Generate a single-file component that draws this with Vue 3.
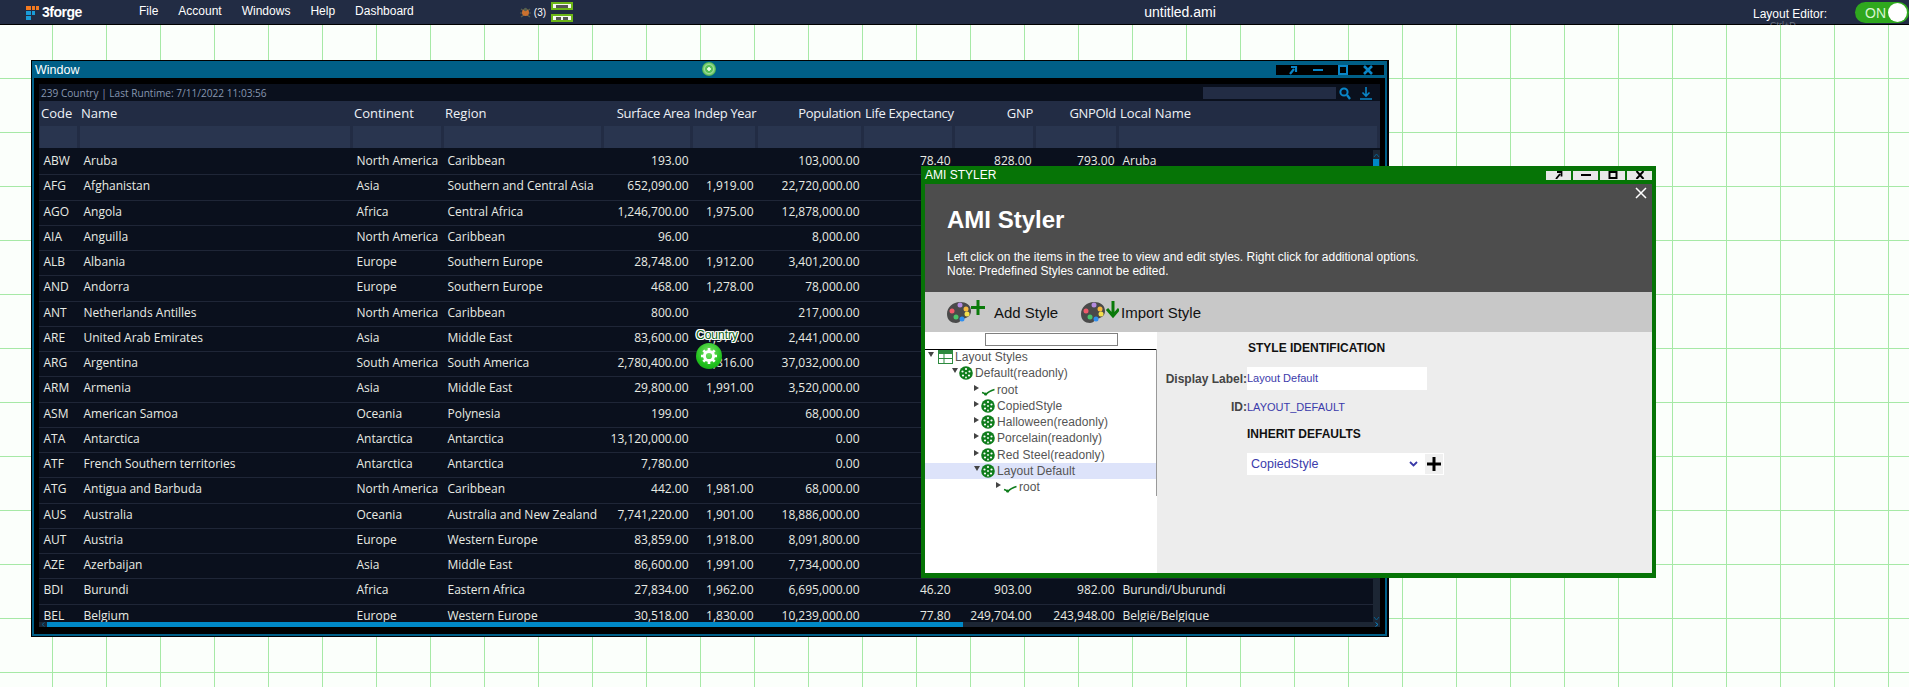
<script setup>
const menus = ["File", "Account", "Windows", "Help", "Dashboard"];

const columns = [
  { label: "Code", width: 40 },
  { label: "Name", width: 273 },
  { label: "Continent", width: 91 },
  { label: "Region", width: 160 },
  { label: "Surface Area", width: 89, num: true },
  { label: "Indep Year", width: 65, num: true },
  { label: "Population", width: 106, num: true },
  { label: "Life Expectancy", width: 91, num: true },
  { label: "GNP", width: 81, num: true },
  { label: "GNPOld", width: 83, num: true },
  { label: "Local Name", width: 261 },
];

const gridCols = columns.map((c) => c.width + "px").join(" ");

// the right hand columns are left empty where the styler window sits on top of them
const rows = [
  ["ABW", "Aruba", "North America", "Caribbean", "193.00", "", "103,000.00", "78.40", "828.00", "793.00", "Aruba"],
  ["AFG", "Afghanistan", "Asia", "Southern and Central Asia", "652,090.00", "1,919.00", "22,720,000.00", "", "", "", ""],
  ["AGO", "Angola", "Africa", "Central Africa", "1,246,700.00", "1,975.00", "12,878,000.00", "", "", "", ""],
  ["AIA", "Anguilla", "North America", "Caribbean", "96.00", "", "8,000.00", "", "", "", ""],
  ["ALB", "Albania", "Europe", "Southern Europe", "28,748.00", "1,912.00", "3,401,200.00", "", "", "", ""],
  ["AND", "Andorra", "Europe", "Southern Europe", "468.00", "1,278.00", "78,000.00", "", "", "", ""],
  ["ANT", "Netherlands Antilles", "North America", "Caribbean", "800.00", "", "217,000.00", "", "", "", ""],
  ["ARE", "United Arab Emirates", "Asia", "Middle East", "83,600.00", "1,971.00", "2,441,000.00", "", "", "", ""],
  ["ARG", "Argentina", "South America", "South America", "2,780,400.00", "1,816.00", "37,032,000.00", "", "", "", ""],
  ["ARM", "Armenia", "Asia", "Middle East", "29,800.00", "1,991.00", "3,520,000.00", "", "", "", ""],
  ["ASM", "American Samoa", "Oceania", "Polynesia", "199.00", "", "68,000.00", "", "", "", ""],
  ["ATA", "Antarctica", "Antarctica", "Antarctica", "13,120,000.00", "", "0.00", "", "", "", ""],
  ["ATF", "French Southern territories", "Antarctica", "Antarctica", "7,780.00", "", "0.00", "", "", "", ""],
  ["ATG", "Antigua and Barbuda", "North America", "Caribbean", "442.00", "1,981.00", "68,000.00", "", "", "", ""],
  ["AUS", "Australia", "Oceania", "Australia and New Zealand", "7,741,220.00", "1,901.00", "18,886,000.00", "", "", "", ""],
  ["AUT", "Austria", "Europe", "Western Europe", "83,859.00", "1,918.00", "8,091,800.00", "", "", "", ""],
  ["AZE", "Azerbaijan", "Asia", "Middle East", "86,600.00", "1,991.00", "7,734,000.00", "", "", "", ""],
  ["BDI", "Burundi", "Africa", "Eastern Africa", "27,834.00", "1,962.00", "6,695,000.00", "46.20", "903.00", "982.00", "Burundi/Uburundi"],
  ["BEL", "Belgium", "Europe", "Western Europe", "30,518.00", "1,830.00", "10,239,000.00", "77.80", "249,704.00", "243,948.00", "België/Belgique"],
];

const tree = [
  { label: "Layout Styles", level: 0, open: true, icon: "table" },
  { label: "Default(readonly)", level: 1, open: true, icon: "palette" },
  { label: "root", level: 2, icon: "check" },
  { label: "CopiedStyle", level: 2, icon: "palette" },
  { label: "Halloween(readonly)", level: 2, icon: "palette" },
  { label: "Porcelain(readonly)", level: 2, icon: "palette" },
  { label: "Red Steel(readonly)", level: 2, icon: "palette" },
  { label: "Layout Default", level: 2, open: true, icon: "palette", selected: true },
  { label: "root", level: 3, icon: "check" },
];
</script>

<template>
  <div class="page">
    <header class="topbar">
      <div class="logo">
        <svg width="15" height="16" viewBox="0 0 15 16">
          <rect x="0" y="2" width="5" height="4" fill="#f47a20" />
          <rect x="6" y="2" width="3" height="4" fill="#f47a20" />
          <rect x="10" y="2" width="3" height="4" fill="#f47a20" />
          <rect x="0" y="7" width="5" height="4" fill="#1a9bd7" />
          <rect x="6" y="7" width="3" height="4" fill="#1a9bd7" />
          <rect x="0" y="12" width="5" height="4" fill="#1a9bd7" />
        </svg>
        <span>3forge</span>
      </div>
      <nav class="menu">
        <span v-for="m in menus" :key="m">{{ m }}</span>
      </nav>
      <div class="status-icons">
        <svg width="11" height="11" viewBox="0 0 11 11">
          <path d="M1 2l3 2M10 2 7 4M0 6h3M11 6H8M1 10l3-2M10 10 7 8" stroke="#56604f" stroke-width="1.200" />
          <circle cx="5.500" cy="5.500" r="3.500" fill="#c9702f" />
          <circle cx="5.500" cy="2.500" r="1.700" fill="#56604f" />
        </svg>
        <span class="count">(3)</span>
        <div class="mini-btns">
          <span class="mini"><i></i></span>
          <span class="mini"><i class="two"></i></span>
        </div>
      </div>
      <div class="doc-title">untitled.ami</div>
      <div class="editor-label">
        Layout Editor:
        <small>Ctrl+D</small>
      </div>
      <div class="toggle"><b>ON</b><i></i></div>
    </header>

    <main class="canvas">
      <section class="window">
        <div class="win-title">
          <span>Window</span>
          <div class="win-dot"></div>
          <div class="win-ctrls">
            <svg width="12" height="10" viewBox="0 0 12 10"><path d="M3 9 7 4M4 2h5v5" fill="none" stroke="#0a86c8" stroke-width="2.200" /></svg>
            <svg width="12" height="10" viewBox="0 0 12 10"><rect x="1" y="4" width="10" height="2" fill="#0a86c8" /></svg>
            <svg width="12" height="10" viewBox="0 0 12 10"><rect x="2" y="1" width="8" height="8" fill="none" stroke="#0a86c8" stroke-width="2" /></svg>
            <svg width="12" height="10" viewBox="0 0 12 10"><path d="M2 1 10 9M10 1 2 9" stroke="#0a86c8" stroke-width="2.600" /></svg>
          </div>
        </div>
        <div class="win-body">
          <div class="tbl">
            <div class="tbl-status">
              <span>239 Country | Last Runtime: 7/11/2022 11:03:56</span>
              <div class="tbl-search"></div>
              <svg width="12" height="14" viewBox="0 0 12 14"><circle cx="5" cy="6" r="3.600" fill="none" stroke="#0a86c8" stroke-width="2" /><path d="M8 9l3 4" stroke="#0a86c8" stroke-width="2.400" /></svg>
              <svg class="dl" width="12" height="14" viewBox="0 0 12 14"><path d="M6 1v9M2.500 6.500 6 10l3.500-3.500M0 13h12" fill="none" stroke="#0a86c8" stroke-width="1.600" /></svg>
            </div>
            <div class="tbl-head">
              <div class="head-row" :style="{ gridTemplateColumns: gridCols }">
                <div v-for="c in columns" :key="c.label" class="hcell" :class="{ num: c.num }">{{ c.label }}</div>
              </div>
              <div class="filter-row" :style="{ gridTemplateColumns: gridCols }">
                <div v-for="c in columns" :key="c.label" class="fcell"></div>
              </div>
            </div>
            <div class="tbl-rows">
              <div v-for="r in rows" :key="r[0]" class="row" :style="{ gridTemplateColumns: gridCols }">
                <div v-for="(v, i) in r" :key="i" class="cell" :class="{ num: columns[i].num }">{{ v }}</div>
              </div>
              <div class="vscroll">
                <svg class="up" width="7" height="5" viewBox="0 0 7 5"><path d="M1 4 3.500 1 6 4" fill="none" stroke="#0a5f8c" /></svg>
                <i></i>
                <svg class="down" width="7" height="5" viewBox="0 0 7 5"><path d="M1 1 3.500 4 6 1" fill="none" stroke="#0a5f8c" /></svg>
              </div>
            </div>
            <div class="hscroll">
              <svg class="left" width="5" height="5" viewBox="0 0 5 5"><path d="M3.500 0.500 1 2.500 3.500 4.500" fill="none" stroke="#0a5f8c" /></svg>
              <i></i>
              <svg class="right" width="5" height="5" viewBox="0 0 5 5"><path d="M1.500 0.500 4 2.500 1.500 4.500" fill="none" stroke="#0a86c8" /></svg>
            </div>
          </div>
        </div>
        <div class="col-tag">
          <span>Country</span>
          <div class="gear">
            <svg width="18" height="18" viewBox="0 0 18 18">
              <circle cx="9" cy="9" r="4.600" fill="none" stroke="#fff" stroke-width="3" />
              <path d="M9 1v3M9 14v3M1 9h3M14 9h3M3.300 3.300l2.200 2.200M12.500 12.500l2.200 2.200M14.700 3.300l-2.200 2.200M5.500 12.500l-2.200 2.200" stroke="#fff" stroke-width="2.600" />
            </svg>
          </div>
        </div>
      </section>

      <section class="styler">
        <div class="st-title">
          <span>AMI STYLER</span>
          <div class="st-ctrls">
            <span><svg width="10" height="8" viewBox="0 0 10 8"><path d="M2 8 6 3M3 1h4.500v4.500" fill="none" stroke="#000" stroke-width="1.800" /></svg></span>
            <span><svg width="10" height="8" viewBox="0 0 10 8"><rect x="0" y="3" width="10" height="2" /></svg></span>
            <span><svg width="10" height="8" viewBox="0 0 10 8"><rect x="1.500" y="1" width="7" height="6" fill="none" stroke="#000" stroke-width="2" /></svg></span>
            <span><svg width="10" height="8" viewBox="0 0 10 8"><path d="M1.500 0 8.500 8M8.500 0 1.500 8" stroke="#000" stroke-width="2" /></svg></span>
          </div>
        </div>
        <div class="st-body">
          <div class="st-head">
            <svg class="st-close" width="12" height="12" viewBox="0 0 12 12"><path d="M1 1 11 11M11 1 1 11" stroke="#fff" stroke-width="1.500" /></svg>
            <h1>AMI Styler</h1>
            <p>Left click on the items in the tree to view and edit styles. Right click for additional options.<br />Note: Predefined Styles cannot be edited.</p>
          </div>
          <div class="st-tools">
            <div class="tool add">
              <svg width="38" height="24" viewBox="0 0 38 24">
                <path d="M13 2C6 2 0 7 0 14c0 6 4 9 9 9 4 0 4-3 7-4 4-1 8-3 8-8 0-6-5-9-11-9z" fill="#4a4a4a" />
                <circle cx="13" cy="5" r="2.500" fill="#b48be0" /><circle cx="19" cy="9" r="2.500" fill="#f5b942" /><circle cx="20" cy="14" r="2.500" fill="#f4e04d" />
                <circle cx="15" cy="19" r="2.500" fill="#2f8ff0" /><circle cx="9" cy="17" r="2.500" fill="#49c46a" /><circle cx="5" cy="11" r="2.500" fill="#ef5a6a" />
                <path d="M31 0v15M24 7.500h14" stroke="#0a7a0a" stroke-width="3" />
              </svg>
              <span>Add Style</span>
            </div>
            <div class="tool imp">
              <svg width="38" height="24" viewBox="0 0 38 24">
                <path d="M13 2C6 2 0 7 0 14c0 6 4 9 9 9 4 0 4-3 7-4 4-1 8-3 8-8 0-6-5-9-11-9z" fill="#4a4a4a" />
                <circle cx="13" cy="5" r="2.500" fill="#b48be0" /><circle cx="19" cy="9" r="2.500" fill="#f5b942" /><circle cx="20" cy="14" r="2.500" fill="#f4e04d" />
                <circle cx="15" cy="19" r="2.500" fill="#2f8ff0" /><circle cx="9" cy="17" r="2.500" fill="#49c46a" /><circle cx="5" cy="11" r="2.500" fill="#ef5a6a" />
                <path d="M32 1v13M26 9l6 7 6-7" fill="none" stroke="#0a7a0a" stroke-width="3" />
              </svg>
              <span>Import Style</span>
            </div>
          </div>
          <div class="st-main">
            <aside class="tree">
              <div class="tree-search"><div class="tree-input"></div></div>
              <ul class="tree-list">
                <li v-for="(n, i) in tree" :key="i" class="node" :class="['lvl' + n.level, { sel: n.selected }]">
                  <i class="arrow" :class="{ open: n.open }"></i>
                  <svg v-if="n.icon === 'table'" width="15" height="14" viewBox="0 0 15 14">
                    <rect x="0.500" y="0.500" width="14" height="13" fill="#fff" stroke="#2d8a3e" />
                    <rect x="0.500" y="0.500" width="14" height="3.500" fill="#2d8a3e" />
                    <path d="M0.500 8.500h14M6 4v10" stroke="#2d8a3e" />
                  </svg>
                  <svg v-else-if="n.icon === 'palette'" width="14" height="14" viewBox="0 0 14 14">
                    <circle cx="7" cy="7" r="6.800" fill="#0f7d1c" />
                    <circle cx="7" cy="3" r="1.100" fill="#fff" /><circle cx="3.500" cy="5.500" r="1.100" fill="#fff" /><circle cx="10.500" cy="5.500" r="1.100" fill="#fff" />
                    <circle cx="4" cy="9.500" r="1.100" fill="#fff" /><circle cx="10" cy="9.500" r="1.100" fill="#fff" /><circle cx="7" cy="7" r="0.900" fill="#fff" /><circle cx="7" cy="11.500" r="0.900" fill="#fff" />
                  </svg>
                  <svg v-else width="14" height="14" viewBox="0 0 14 14">
                    <path d="M1 9.500C3 10 4 11 5 11.500 7 9 10 7.500 13.500 6.500" fill="none" stroke="#0f7d1c" stroke-width="1.600" />
                    <circle cx="4.500" cy="11" r="1.500" fill="#0f7d1c" />
                  </svg>
                  <span>{{ n.label }}</span>
                </li>
              </ul>
            </aside>
            <div class="form">
              <h3 class="sec1">STYLE IDENTIFICATION</h3>
              <div class="f-row f-display">
                <label>Display Label:</label>
                <div class="f-input">Layout Default</div>
              </div>
              <div class="f-row f-id">
                <label>ID:</label>
                <div class="f-val">LAYOUT_DEFAULT</div>
              </div>
              <h3 class="sec2">INHERIT DEFAULTS</h3>
              <div class="f-select-row">
                <div class="f-select">
                  <span>CopiedStyle</span>
                  <svg width="9" height="6" viewBox="0 0 9 6"><path d="M1 1 4.500 4.500 8 1" fill="none" stroke="#3a3aa8" stroke-width="1.800" /></svg>
                </div>
                <div class="f-plus">
                  <svg width="14" height="14" viewBox="0 0 14 14"><path d="M7 0v14M0 7h14" stroke="#000" stroke-width="3" /></svg>
                </div>
              </div>
            </div>
          </div>
        </div>
      </section>
    </main>
  </div>
</template>

<style>
html,
body {
  margin: 0;
  overflow: hidden;
}
</style>

<style scoped>
.page {
  width: 1909px;
  height: 687px;
  display: flex;
  flex-direction: column;
  font-family: "Liberation Sans", Arial, sans-serif;
}

/* top bar */
.topbar {
  height: 24px;
  flex: none;
  background: #222c44;
  border-bottom: 1px solid #000;
  color: #fff;
  display: flex;
  align-items: center;
  position: relative;
  font-size: 12px;
}
.logo {
  display: flex;
  align-items: center;
  gap: 1px;
  margin-left: 26px;
  width: 113px;
  font-weight: 700;
  font-size: 14px;
  letter-spacing: -0.5px;
}
.menu {
  display: flex;
  gap: 20px;
  margin-top: -3px;
}
.status-icons {
  display: flex;
  align-items: center;
  margin-left: 106px;
  gap: 3px;
}
.count {
  font-size: 10px;
}
.mini-btns {
  display: flex;
  flex-direction: column;
  gap: 3.500px;
  margin-left: 2px;
}
.mini {
  width: 22px;
  height: 8.500px;
  box-sizing: border-box;
  background: #f6f8f2;
  border: 2px solid #6cb517;
  display: flex;
  align-items: center;
  justify-content: center;
}
.mini i {
  display: block;
  width: 12px;
  height: 3px;
  background: #555;
}
.mini i.two {
  width: 12px;
  background: linear-gradient(90deg, #555 40%, transparent 40% 60%, #555 60%);
}
.doc-title {
  position: absolute;
  left: 1080px;
  width: 200px;
  text-align: center;
  font-size: 14px;
  top: 4px;
}
.editor-label {
  position: absolute;
  left: 1753px;
  top: 7px;
  line-height: 14px;
}
.editor-label small {
  position: absolute;
  left: 17px;
  top: 11px;
  font-size: 9px;
  color: #6b7280;
  white-space: nowrap;
}
.toggle {
  position: absolute;
  left: 1855px;
  top: 2px;
  width: 54px;
  height: 21px;
  border-radius: 11px;
  background: #2fa81e;
  display: flex;
  align-items: center;
  justify-content: space-between;
  padding: 0 2px 0 10px;
  box-sizing: border-box;
}
.toggle b {
  font-size: 14px;
  font-weight: 400;
  color: #d8f5d0;
}
.toggle i {
  width: 19px;
  height: 19px;
  border-radius: 50%;
  background: #fff;
}

/* canvas */
.canvas {
  flex: 1;
  position: relative;
  background-color: #fbfffb;
  background-image: linear-gradient(90deg, #a6e9a6 1px, transparent 1px),
    linear-gradient(#a6e9a6 1px, transparent 1px);
  background-size: 54px 54px;
  background-position: 52px 53px;
}

/* table window */
.window {
  position: absolute;
  left: 31px;
  top: 35px;
  width: 1358px;
  height: 577px;
  box-sizing: border-box;
  background: #005f87;
  border: 1px solid #000;
  border-right-width: 2px;
  display: flex;
  flex-direction: column;
}
.win-title {
  height: 17px;
  flex: none;
  display: flex;
  align-items: center;
  color: #fff;
  font-size: 12.500px;
  padding-left: 3px;
  position: relative;
}
.win-dot {
  position: absolute;
  left: 670px;
  top: 1px;
  width: 14px;
  height: 14px;
  border-radius: 50%;
  background: radial-gradient(circle, #e8ffe8 0 1.500px, #58c058 2px 3.500px, #9fdd98 4.500px, #45b045 7px);
}
.win-ctrls {
  position: absolute;
  left: 1244px;
  top: 4px;
  width: 108px;
  height: 10px;
  background: #000;
  display: flex;
  justify-content: space-around;
  padding: 0 4px;
  box-sizing: border-box;
}
.win-body {
  flex: 1;
  min-height: 0;
  margin: 0 2px 2px 2px;
  background: #000;
  padding: 6px 5px 7px 5px;
  display: flex;
}
.tbl {
  flex: 1;
  min-width: 0;
  background: #0a101d;
  display: flex;
  flex-direction: column;
  overflow: hidden;
}
.tbl-status {
  height: 17px;
  flex: none;
  display: flex;
  align-items: center;
  font-family: "Open Sans", sans-serif;
  font-size: 10.100px;
  color: #8796b0;
  padding-left: 2px;
}
.tbl-status span {
  flex: 1;
}
.tbl-search {
  width: 133px;
  height: 12px;
  background: #222c44;
  margin-right: 3px;
}
.tbl-status .dl {
  margin: 0 8px 0 9px;
}
.tbl-head {
  flex: none;
  background: #222c44;
}
.head-row,
.filter-row,
.row {
  display: grid;
}
.head-row {
  height: 25px;
  font-family: "Open Sans", sans-serif;
  font-size: 13px;
  color: #eef1f6;
}
.hcell {
  padding: 0 2px;
  line-height: 25px;
  white-space: nowrap;
}
.hcell.num {
  text-align: right;
  letter-spacing: -0.3px;
}
.filter-row {
  height: 22px;
}
.fcell {
  background: #29354f;
  margin: 0 2px 0 1px;
}
.tbl-rows {
  flex: 1;
  min-height: 0;
  margin-top: 2px;
  position: relative;
  overflow: hidden;
}
.row {
  height: 25.250px;
  box-sizing: border-box;
  border-bottom: 1px solid #1f2637;
  font-family: "Open Sans", sans-serif;
  font-size: 12px;
  color: #e8ebe4;
  line-height: 22px;
}
.cell {
  padding: 0 3.500px 0 4.500px;
  white-space: nowrap;
  overflow: hidden;
}
.cell.num {
  text-align: right;
  overflow: visible;
}
.vscroll {
  position: absolute;
  right: 0;
  top: 0;
  bottom: 0;
  width: 7px;
  background: #1c2634;
}
.vscroll .up,
.vscroll .down {
  position: absolute;
  left: 0;
}
.vscroll .up {
  top: 3px;
}
.vscroll .down {
  bottom: 1px;
}
.vscroll i {
  display: block;
  margin-top: 9px;
  width: 6px;
  height: 156px;
  background: #0088c6;
}
.hscroll {
  height: 5px;
  flex: none;
  background: #1c2634;
  padding-left: 8px;
  position: relative;
}
.hscroll i {
  display: block;
  width: 916px;
  height: 5px;
  background: #0088c6;
}
.hscroll .left,
.hscroll .right {
  position: absolute;
  top: 0;
}
.hscroll .left {
  left: 2px;
}
.hscroll .right {
  right: 1px;
}

/* hover tag over the table */
.col-tag {
  position: absolute;
  left: 664px;
  top: 268px;
  width: 42px;
  display: flex;
  flex-direction: column;
  align-items: flex-start;
}
.col-tag span {
  font-size: 12px;
  line-height: 13px;
  color: #0b5d12;
  text-shadow: 1px 0 0 #fff, -1px 0 0 #fff, 0 1px 0 #fff, 0 -1px 0 #fff, 1px 1px 0 #fff, -1px -1px 0 #fff, 1px -1px 0 #fff, -1px 1px 0 #fff;
}
.gear {
  margin-top: 1px;
  width: 26px;
  height: 26px;
  border-radius: 50%;
  background: radial-gradient(circle at 50% 35%, #7be36a, #22c11e 60%, #12a012);
  display: flex;
  align-items: center;
  justify-content: center;
}

/* styler dialog */
.styler {
  position: absolute;
  left: 921px;
  top: 141px;
  width: 735px;
  height: 412px;
  box-sizing: border-box;
  background: #067406;
  padding: 0 4px 5px 4px;
  display: flex;
  flex-direction: column;
}
.st-title {
  height: 18px;
  flex: none;
  display: flex;
  align-items: center;
  justify-content: space-between;
  color: #fff;
  font-size: 12px;
}
.st-ctrls {
  display: flex;
  gap: 2px;
}
.st-ctrls span {
  width: 25px;
  height: 9px;
  background: #e8e8e8;
  display: flex;
  align-items: center;
  justify-content: center;
}
.st-body {
  flex: 1;
  min-height: 0;
  display: flex;
  flex-direction: column;
}
.st-head {
  height: 108px;
  flex: none;
  background: #4d4d4d;
  color: #fff;
  padding-left: 22px;
  position: relative;
  box-sizing: border-box;
}
.st-close {
  position: absolute;
  right: 5px;
  top: 3px;
}
.st-head h1 {
  margin: 0;
  padding-top: 22px;
  font-size: 24px;
  line-height: 28px;
  font-weight: 700;
}
.st-head p {
  margin: 16px 0 0;
  font-size: 12px;
  line-height: 14px;
}
.st-tools {
  height: 40px;
  flex: none;
  background: #c8c8c8;
  display: flex;
  align-items: center;
  padding-left: 22px;
  font-size: 15px;
  color: #111;
}
.tool {
  display: flex;
  align-items: center;
}
.tool.add {
  width: 134px;
}
.tool.add span {
  margin-left: 9px;
}
.tool.imp span {
  margin-left: 2px;
}
.st-main {
  flex: 1;
  min-height: 0;
  display: flex;
  background: #ededed;
}
.tree {
  width: 232px;
  flex: none;
  background: #fff;
}
.tree-search {
  height: 16px;
  border-bottom: 1px solid #000;
  padding-top: 1px;
}
.tree-input {
  margin-left: 60px;
  width: 133px;
  height: 13px;
  box-sizing: border-box;
  border: 1px solid #808080;
  background: #fff;
}
.tree-list {
  list-style: none;
  margin: -1px 0 0;
  padding: 0;
  height: 147px;
  border-right: 1px solid #999;
}
.node {
  height: 16.250px;
  display: flex;
  align-items: center;
  font-size: 12px;
  color: #555;
  white-space: nowrap;
  position: relative;
  letter-spacing: 0.05px;
}
.node.sel {
  background: #dde3fa;
}
.node svg {
  margin-right: 2px;
  flex: none;
}
.lvl0 { padding-left: 13px; }
.lvl1 { padding-left: 34px; }
.lvl2 { padding-left: 56px; }
.lvl3 { padding-left: 78px; }
.arrow {
  position: absolute;
  top: 3px;
  width: 0;
  height: 0;
  border-style: solid;
  border-color: transparent;
}
.arrow:not(.open) {
  border-width: 3px 0 3px 5px;
  border-left-color: #444;
}
.arrow.open {
  border-width: 5px 3px 0 3px;
  border-top-color: #444;
}
.lvl0 .arrow { left: 3px; }
.lvl1 .arrow { left: 27px; }
.lvl2 .arrow { left: 49px; }
.lvl3 .arrow { left: 71px; }
.form {
  flex: 1;
  min-width: 0;
  padding-left: 90px;
  color: #000;
  font-size: 12px;
  position: relative;
}
.form h3 {
  margin: 0;
  font-size: 12px;
  line-height: 14px;
  font-weight: 700;
  color: #111;
}
.sec1 {
  padding-top: 9px;
  padding-left: 1px;
}
.f-row {
  display: flex;
  align-items: center;
  margin-left: -90px;
}
.f-row label {
  width: 90px;
  text-align: right;
  font-weight: 700;
  font-size: 12px;
  color: #444;
  white-space: nowrap;
}
.f-display {
  margin-top: 12px;
  height: 23px;
}
.f-input {
  width: 180px;
  height: 23px;
  line-height: 23px;
  background: #fff;
  color: #3b3bab;
  font-size: 11px;
}
.f-id {
  margin-top: 5px;
  height: 23px;
}
.f-val {
  color: #3b3bab;
  font-size: 11px;
}
.form .sec2 {
  margin-top: 9px;
}
.f-select-row {
  display: flex;
  margin-top: 12px;
  height: 22px;
}
.f-select {
  width: 177px;
  box-sizing: border-box;
  background: #fff;
  display: flex;
  align-items: center;
  justify-content: space-between;
  padding: 0 6px 0 4px;
  color: #3b3bab;
  font-size: 12.500px;
}
.f-plus {
  width: 20px;
  background: #f0f0f0;
  border: 1px solid #fff;
  box-sizing: border-box;
  display: flex;
  align-items: center;
  justify-content: center;
}
</style>
